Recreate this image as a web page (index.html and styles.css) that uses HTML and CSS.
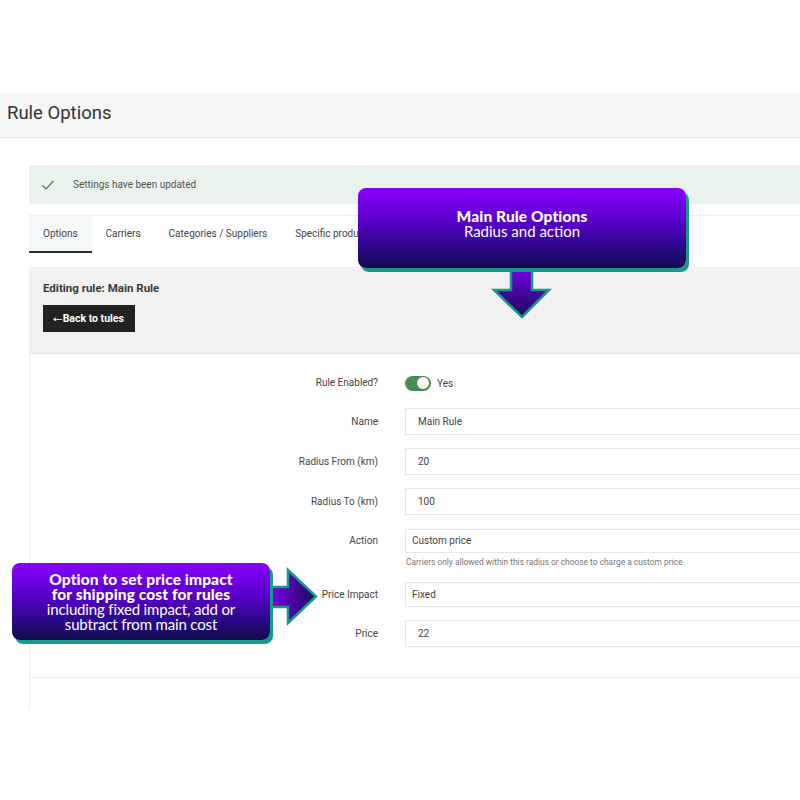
FILE: index.html
```html
<!DOCTYPE html>
<html lang="en">
<head>
<meta charset="utf-8">
<title>Rule Options</title>
<link rel="stylesheet" href="styles.css">
</head>
<body>
<div class="page">
  <header class="page-header">
    <h1 class="page-title">Rule Options</h1>
  </header>

  <main class="content">
    <div class="alert">
      <svg class="alert-check" viewBox="0 0 14 14" width="14" height="14">
        <path d="M1.5 7.5 L5 11 L12.5 3" fill="none" stroke="#4f8a5c" stroke-width="1.3"/>
      </svg>
      <span class="alert-text">Settings have been updated</span>
    </div>

    <nav class="tabs">
      <a class="tab tab-active">Options</a>
      <a class="tab">Carriers</a>
      <a class="tab">Categories / Suppliers</a>
      <a class="tab">Specific products</a>
    </nav>

    <section class="panel-head">
      <h2 class="panel-title">Editing rule: Main Rule</h2>
      <button class="btn-back" type="button"><span class="btn-arrow">←</span>Back to tules</button>
    </section>

    <form class="form">
      <div class="row row-toggle">
        <label class="row-label">Rule Enabled?</label>
        <div class="row-field">
          <span class="switch"><span class="switch-knob"></span></span>
          <span class="switch-text">Yes</span>
        </div>
      </div>
      <div class="row">
        <label class="row-label">Name</label>
        <div class="row-field"><div class="input">Main Rule</div></div>
      </div>
      <div class="row">
        <label class="row-label">Radius From (km)</label>
        <div class="row-field"><div class="input">20</div></div>
      </div>
      <div class="row row-before-select">
        <label class="row-label">Radius To (km)</label>
        <div class="row-field"><div class="input">100</div></div>
      </div>
      <div class="row row-action">
        <label class="row-label row-label-select">Action</label>
        <div class="row-field">
          <div class="select">Custom price</div>
          <p class="help">Carriers only allowed within this radius or choose to charge a custom price</p>
        </div>
      </div>
      <div class="row row-impact">
        <label class="row-label row-label-impact">Price Impact</label>
        <div class="row-field"><div class="select select-tall">Fixed</div></div>
      </div>
      <div class="row row-last">
        <label class="row-label">Price</label>
        <div class="row-field"><div class="input">22</div></div>
      </div>
    </form>
    <div class="form-footer"></div>
  </main>

  <svg class="arrow arrow-down" width="64" height="60" viewBox="0 0 64 60">
    <defs>
      <linearGradient id="gd" x1="0" y1="0" x2="0" y2="1">
        <stop offset="0" stop-color="#8400f6"/>
        <stop offset="1" stop-color="#160a58"/>
      </linearGradient>
    </defs>
    <polygon points="21,0 42,0 42,28 59,28 32,55 4,28 21,28" fill="url(#gd)" stroke="#17998b" stroke-width="2.5" stroke-linejoin="miter"/>
  </svg>
  <div class="callout callout-top">
    <strong class="callout-strong">Main Rule Options</strong>
    <span class="callout-line">Radius and action</span>
  </div>

  <svg class="arrow arrow-right" width="54" height="62" viewBox="0 0 54 62">
    <defs>
      <linearGradient id="gr" x1="0" y1="0" x2="1" y2="0">
        <stop offset="0" stop-color="#8400f6"/>
        <stop offset="1" stop-color="#160a58"/>
      </linearGradient>
    </defs>
    <polygon points="0,21 22,21 22,4 50,30.5 22,57 22,41 0,41" fill="url(#gr)" stroke="#17998b" stroke-width="2.5"/>
  </svg>
  <div class="callout callout-left">
    <strong class="callout-strong">Option to set price impact<br>for shipping cost for rules</strong>
    <span class="callout-line callout-line-narrow">including fixed impact, add or<br>subtract from main cost</span>
  </div>
</div>
</body>
</html>
```

FILE: styles.css
```css
* { box-sizing: border-box; }

html, body {
  margin: 0;
  padding: 0;
  background: #ffffff;
  overflow: hidden;
}

body {
  font-family: Roboto, "Noto Sans", sans-serif;
  color: #444;
  width: 800px;
  height: 800px;
}

.page {
  position: relative;
  width: 800px;
  height: 800px;
  padding-top: 93px;
}

/* header */
.page-header {
  height: 45px;
  background: #f6f6f6;
  border-bottom: 1px solid #e8e8e8;
  display: flex;
  align-items: center;
  padding-left: 7px;
  padding-bottom: 4px;
}

.page-title {
  margin: 0;
  font-size: 18.5px;
  font-weight: 400;
  color: #333;
}

/* main content column */
.content {
  margin-left: 29px;
  margin-right: -40px;
  margin-top: 27px;
}

.alert {
  height: 39px;
  background: #e9f2ec;
  display: flex;
  align-items: center;
  padding-left: 44px;
  position: relative;
}

.alert-check {
  position: absolute;
  left: 12px;
  top: 13px;
}

.alert-text {
  font-size: 10px;
  color: #555;
}

.tabs {
  margin-top: 11px;
  border-top: 1px solid #eeeeee;
  display: flex;
  height: 38px;
}

.tab {
  display: flex;
  align-items: center;
  padding: 0 14px;
  font-size: 10px;
  color: #444;
  border-bottom: 2px solid transparent;
}

.tab-active {
  background: #f6f9f9;
  border-bottom-color: #2b2b2b;
}

.panel-head {
  margin-top: 14px;
  background: #f1f1f1;
  border-bottom: 1px solid #e4e4e4;
  padding: 14px 14px 20px;
  height: 87px;
}

.panel-title {
  margin: 0;
  font-size: 11.5px;
  font-weight: 700;
  color: #3a3a3a;
  line-height: 14px;
}

.btn-back {
  margin-top: 10px;
  display: flex;
  align-items: center;
  justify-content: center;
  width: 92px;
  height: 27px;
  border: none;
  border-radius: 0;
  background: #222222;
  color: #ffffff;
  font-family: inherit;
  font-size: 10.5px;
  font-weight: 700;
  padding: 0;
}

.btn-arrow {
  font-family: "DejaVu Sans", sans-serif;
  font-weight: 400;
  font-size: 9px;
  transform: scaleX(1.3);
  display: inline-block;
  margin-right: 1px;
}

/* form */
.form {
  border-left: 1px solid #ececec;
  padding-top: 17px;
  padding-bottom: 30px;
  border-bottom: 1px solid #ececec;
}

.row {
  display: flex;
  align-items: flex-start;
  margin-bottom: 13px;
}

.row-before-select { margin-bottom: 14px; }
.row-action { margin-bottom: 14px; }
.row-last { margin-bottom: 0; }

.row-label {
  width: 348px;
  flex: none;
  text-align: right;
  font-size: 10px;
  color: #444;
  line-height: 27px;
  margin-right: 27px;
}

.row-label-select { line-height: 24px; }
.row-label-impact { line-height: 25px; }

.row-field {
  flex: 1;
  min-width: 0;
}

.row-toggle .row-label {
  line-height: 24px;
}

.row-toggle .row-field {
  display: flex;
  align-items: center;
  height: 24px;
}

.switch {
  width: 26px;
  height: 15px;
  border-radius: 8px;
  background: #4b8b4f;
  position: relative;
  display: inline-block;
}

.switch-knob {
  position: absolute;
  right: 2px;
  top: 1.5px;
  width: 12px;
  height: 12px;
  border-radius: 50%;
  background: #ffffff;
}

.switch-text {
  margin-left: 6px;
  font-size: 10px;
  color: #444;
}

.input {
  height: 27px;
  border: 1px solid #e6e6e6;
  background: #ffffff;
  padding-left: 12px;
  font-size: 10px;
  color: #444;
  line-height: 25px;
}

.select {
  height: 24px;
  border: 1px solid #e6e6e6;
  background: #ffffff;
  padding-left: 6px;
  font-size: 10px;
  color: #444;
  line-height: 22px;
}

.select-tall {
  height: 25px;
  line-height: 23px;
}

.help {
  margin: 3px 0 0 1px;
  font-size: 8.4px;
  color: #777;
  line-height: 12px;
}

.form-footer {
  height: 31px;
  border-left: 1px solid #ececec;
}

/* annotation overlays */
.callout {
  position: absolute;
  border-radius: 8px;
  background: linear-gradient(180deg, #8a00ff 0%, #5b00cc 40%, #2a0a88 75%, #120a4d 100%);
  box-shadow: 3px 4px 0 #17998b;
  color: #ffffff;
  font-family: Lato, sans-serif;
  text-align: center;
  display: flex;
  flex-direction: column;
  align-items: center;
  line-height: 15px;
  font-size: 15px;
  z-index: 2;
  white-space: nowrap;
}

.callout-strong {
  font-weight: 900;
  font-size: 15.5px;
  letter-spacing: 0.1px;
}

.callout-line {
  font-weight: 400;
}

.callout-line-narrow {
  letter-spacing: -0.15px;
}

.callout-top {
  left: 358px;
  top: 188px;
  width: 328px;
  height: 80px;
  padding-top: 21px;
}

.callout-left {
  left: 12px;
  top: 563px;
  width: 258px;
  height: 77px;
  padding-top: 9px;
}

.arrow {
  position: absolute;
  z-index: 1;
}

.arrow-down {
  left: 490px;
  top: 262px;
}

.arrow-right {
  left: 266px;
  top: 566px;
}
```
